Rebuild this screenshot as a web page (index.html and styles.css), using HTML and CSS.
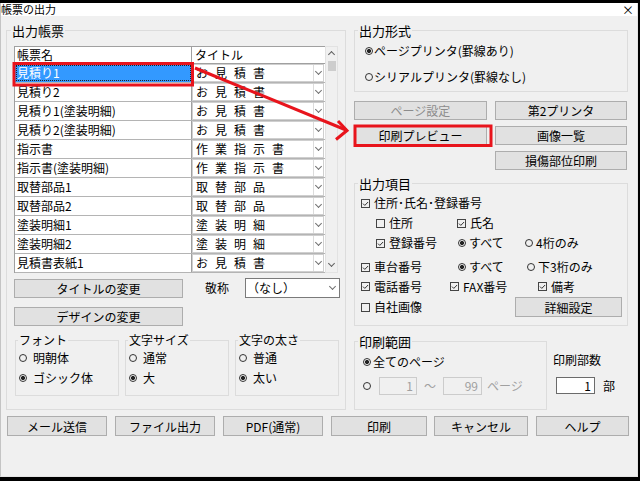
FILE: index.html
```html
<!DOCTYPE html>
<html lang="ja">
<head>
<meta charset="utf-8">
<title>帳票の出力</title>
<link rel="stylesheet" href="styles.css">
</head>
<body>
<div class="win">
  <div class="titlebar"><span class="ttl">帳票の出力</span><span class="close">×</span></div>
  <div class="content">
    <div class="main">
      <fieldset class="grp lg">
        <legend>出力帳票</legend>
        <div class="listwrap">
          <div class="grid">
            <div class="hdr"><div class="h1">帳票名</div><div class="h2">タイトル</div></div>
            <div class="row"><div class="c1 sel">見積り1</div><div class="c2"><div class="cmb"><span class="ct">お見積書</span><span class="dd"></span></div></div></div>
            <div class="row"><div class="c1">見積り2</div><div class="c2"><div class="cmb"><span class="ct">お見積書</span><span class="dd"></span></div></div></div>
            <div class="row"><div class="c1">見積り1(塗装明細)</div><div class="c2"><div class="cmb"><span class="ct">お見積書</span><span class="dd"></span></div></div></div>
            <div class="row"><div class="c1">見積り2(塗装明細)</div><div class="c2"><div class="cmb"><span class="ct">お見積書</span><span class="dd"></span></div></div></div>
            <div class="row"><div class="c1">指示書</div><div class="c2"><div class="cmb"><span class="ct">作業指示書</span><span class="dd"></span></div></div></div>
            <div class="row"><div class="c1">指示書(塗装明細)</div><div class="c2"><div class="cmb"><span class="ct">作業指示書</span><span class="dd"></span></div></div></div>
            <div class="row"><div class="c1">取替部品1</div><div class="c2"><div class="cmb"><span class="ct">取替部品</span><span class="dd"></span></div></div></div>
            <div class="row"><div class="c1">取替部品2</div><div class="c2"><div class="cmb"><span class="ct">取替部品</span><span class="dd"></span></div></div></div>
            <div class="row"><div class="c1">塗装明細1</div><div class="c2"><div class="cmb"><span class="ct">塗装明細</span><span class="dd"></span></div></div></div>
            <div class="row"><div class="c1">塗装明細2</div><div class="c2"><div class="cmb"><span class="ct">塗装明細</span><span class="dd"></span></div></div></div>
            <div class="row"><div class="c1">見積書表紙1</div><div class="c2"><div class="cmb"><span class="ct">お見積書</span><span class="dd"></span></div></div></div>
          </div>
          <div class="vs"><span class="sa up"></span><span class="thumb"></span><span class="sp"></span><span class="sa down"></span></div>
        </div>
        <div class="r1">
          <button class="btn bw">タイトルの変更</button>
          <span class="klbl">敬称</span>
          <div class="kcmb"><span class="kt">（なし）</span><span class="dd nb"></span></div>
        </div>
        <div class="r2"><button class="btn bw">デザインの変更</button></div>
        <div class="subs">
          <fieldset class="grp sg"><legend>フォント</legend>
            <div class="srow"><span class="rb"></span>明朝体</div>
            <div class="srow"><span class="rb on"></span>ゴシック体</div>
          </fieldset>
          <fieldset class="grp sg"><legend>文字サイズ</legend>
            <div class="srow"><span class="rb"></span>通常</div>
            <div class="srow"><span class="rb on"></span>大</div>
          </fieldset>
          <fieldset class="grp sg"><legend>文字の太さ</legend>
            <div class="srow"><span class="rb"></span>普通</div>
            <div class="srow"><span class="rb on"></span>太い</div>
          </fieldset>
        </div>
      </fieldset>

      <div class="right">
        <fieldset class="grp fk">
          <legend>出力形式</legend>
          <div class="frow"><span class="rb on"></span>ページプリンタ(罫線あり)</div>
          <div class="frow"><span class="rb"></span>シリアルプリンタ(罫線なし)</div>
        </fieldset>
        <div class="bgrid">
          <button class="btn dis">ページ設定</button>
          <button class="btn">第2プリンタ</button>
          <button class="btn">印刷プレビュー</button>
          <button class="btn">画像一覧</button>
          <button class="btn c2col">損傷部位印刷</button>
        </div>
        <fieldset class="grp fo">
          <legend>出力項目</legend>
          <div class="orow">
            <span class="it"><svg class="cb" viewBox="0 0 9 9"><rect x=".5" y=".5" width="8" height="8" fill="none" stroke="#444"/><path d="M2 4.6l1.8 1.8L7.1 3" fill="none" stroke="#333"/></svg>住所･氏名･登録番号</span>
          </div>
          <div class="orow ind">
            <span class="it w81"><svg class="cb" viewBox="0 0 9 9"><rect x=".5" y=".5" width="8" height="8" fill="none" stroke="#444"/></svg>住所</span>
            <span class="it"><svg class="cb" viewBox="0 0 9 9"><rect x=".5" y=".5" width="8" height="8" fill="none" stroke="#444"/><path d="M2 4.6l1.8 1.8L7.1 3" fill="none" stroke="#333"/></svg>氏名</span>
          </div>
          <div class="orow ind">
            <span class="it w82"><svg class="cb" viewBox="0 0 9 9"><rect x=".5" y=".5" width="8" height="8" fill="none" stroke="#444"/><path d="M2 4.6l1.8 1.8L7.1 3" fill="none" stroke="#333"/></svg>登録番号</span>
            <span class="it w67"><span class="rb on"></span>すべて</span>
            <span class="it"><span class="rb"></span>4桁のみ</span>
          </div>
          <div class="orow mt4">
            <span class="it w97"><svg class="cb" viewBox="0 0 9 9"><rect x=".5" y=".5" width="8" height="8" fill="none" stroke="#444"/><path d="M2 4.6l1.8 1.8L7.1 3" fill="none" stroke="#333"/></svg>車台番号</span>
            <span class="it w69"><span class="rb on"></span>すべて</span>
            <span class="it"><span class="rb"></span>下3桁のみ</span>
          </div>
          <div class="orow h19">
            <span class="it w89"><svg class="cb" viewBox="0 0 9 9"><rect x=".5" y=".5" width="8" height="8" fill="none" stroke="#444"/><path d="M2 4.6l1.8 1.8L7.1 3" fill="none" stroke="#333"/></svg>電話番号</span>
            <span class="it w88"><svg class="cb" viewBox="0 0 9 9"><rect x=".5" y=".5" width="8" height="8" fill="none" stroke="#444"/><path d="M2 4.6l1.8 1.8L7.1 3" fill="none" stroke="#333"/></svg>FAX番号</span>
            <span class="it"><svg class="cb" viewBox="0 0 9 9"><rect x=".5" y=".5" width="8" height="8" fill="none" stroke="#444"/><path d="M2 4.6l1.8 1.8L7.1 3" fill="none" stroke="#333"/></svg>備考</span>
          </div>
          <div class="orow mt1">
            <span class="it w154"><svg class="cb" viewBox="0 0 9 9"><rect x=".5" y=".5" width="8" height="8" fill="none" stroke="#444"/></svg>自社画像</span>
            <button class="btn dbtn">詳細設定</button>
          </div>
        </fieldset>
        <div class="brow">
          <fieldset class="grp fr">
            <legend>印刷範囲</legend>
            <div class="prow1"><span class="rb on"></span>全てのページ</div>
            <div class="prow2"><span class="rb"></span><span class="din">1</span><span class="tilde">～</span><span class="din w39">99</span><span class="gp">ページ</span></div>
          </fieldset>
          <div class="copies">
            <div class="clbl">印刷部数</div>
            <div class="crow"><span class="cin">1</span><span class="bu">部</span></div>
          </div>
        </div>
      </div>
    </div>
    <div class="bbar">
      <button class="btn b100">メール送信</button>
      <button class="btn b100">ファイル出力</button>
      <button class="btn b100">PDF(通常)</button>
      <button class="btn b96">印刷</button>
      <button class="btn b94 g7">キャンセル</button>
      <button class="btn b93">ヘルプ</button>
    </div>
  </div>
</div>
<svg class="anno" width="640" height="481" viewBox="0 0 640 481">
  <rect x="14" y="63.5" width="178.5" height="21.5" fill="none" stroke="#e8141c" stroke-width="3"/>
  <rect x="355" y="126" width="136" height="19.5" fill="none" stroke="#e8141c" stroke-width="3"/>
  <path d="M195 68 L346 130" fill="none" stroke="#e8141c" stroke-width="3"/>
  <path d="M338 121 L347 130.5 L336 139.5" fill="none" stroke="#e8141c" stroke-width="3"/>
</svg>
</body>
</html>
```

FILE: styles.css
```css
* { box-sizing: border-box; }
html, body { margin: 0; padding: 0; }
body {
  background: #000;
  width: 640px;
  height: 481px;
  overflow: hidden;
  font-family: "Noto Sans CJK JP", "Noto Sans", sans-serif;
  font-size: 12px;
  color: #000;
}
.win {
  margin-top: 3px;
  width: 638px;
  height: 474px;
  background: #f0f0f0;
  display: flex;
  flex-direction: column;
  border-left: 1px solid #c4c4c4;
  border-right: 1px solid #e4e4e4;
  border-bottom: 1px solid #e4e4e4;
}
.titlebar {
  height: 13px;
  background: #fff;
  display: flex;
  justify-content: space-between;
  align-items: center;
  font-size: 11px;
  line-height: 13px;
}
.ttl { margin-left: 0; white-space: nowrap; }
.close { font-size: 12px; line-height: 13px; margin-right: 3px; }
.content { padding-left: 5px; }
.main { display: flex; gap: 8px; align-items: flex-start; }

.grp { margin: 0; border: 1px solid #dcdcdc; padding: 0; min-width: 0; }
.grp > legend { padding: 0 1px; font-size: 13px; line-height: 15px; }

.lg { width: 340px; margin-top: 7px; padding: 8px 6px 13px 7px; }
.lg > legend { margin-left: -3px; }

.listwrap { display: flex; width: 324px; }
.grid { width: 311px; border-top: 1px solid #a0a0a0; border-left: 1px solid #a0a0a0; }
.hdr { display: flex; height: 17px; background: #fff; border-bottom: 1px solid #a0a0a0; line-height: 16px; }
.h1 { width: 177px; border-right: 1px solid #a0a0a0; padding-left: 2px; }
.h2 { padding-left: 3px; }
.row { display: flex; height: 19px; border-bottom: 1px solid #b4b4b4; }
.c1 {
  width: 177px;
  background: #fff;
  border-right: 1px solid #a0a0a0;
  padding-left: 2px;
  line-height: 18px;
  white-space: nowrap;
  overflow: hidden;
}
.c1.sel { background: #3399ff; color: #fff; outline: 1px dotted #222; outline-offset: -2px; }
.c2 { flex: 1; display: flex; background: #fff; padding-right: 1px; }
.cmb { flex: 1; display: flex; border: 1px solid #cfcfcf; background: #fff; }
.ct { flex: 1; padding-left: 3px; letter-spacing: 7px; line-height: 16px; white-space: nowrap; overflow: hidden; }
.dd { width: 10px; border-left: 1px solid #dcdcdc; display: flex; justify-content: center; align-items: center; }
.dd::after {
  content: "";
  width: 4px;
  height: 4px;
  border-right: 1px solid #707070;
  border-bottom: 1px solid #707070;
  transform: rotate(45deg);
  margin-top: -3px;
}
.dd.nb { border-left: none; width: 13px; }

.vs { width: 13px; background: #f0f0f0; display: flex; flex-direction: column; align-items: center; border: 1px solid #e2e2e2; }
.sa { width: 5px; height: 5px; border-left: 1px solid #606060; border-top: 1px solid #606060; }
.sa.up { transform: rotate(45deg); margin-top: 5px; }
.sa.down { transform: rotate(225deg); margin-bottom: 6px; }
.thumb { width: 8px; height: 10px; background: #cdcdcd; margin-top: 4px; }
.sp { flex: 1; }

.btn {
  font: inherit;
  font-size: 12px;
  background: #e1e1e1;
  border: 1px solid #adadad;
  border-radius: 0;
  padding: 0;
  margin: 0;
  color: #000;
  line-height: 17px;
  text-align: center;
}
.r1 { display: flex; align-items: center; margin-top: 5px; height: 20px; }
.bw { width: 169px; height: 19px; }
.klbl { width: 40px; margin-left: 22px; line-height: 16px; flex: none; }
.kcmb { width: 95px; height: 20px; border: 1px solid #7a7a7a; background: #fff; display: flex; flex: none; margin-right: -2px; }
.kt { flex: 1; padding-left: 1px; line-height: 18px; }
.r2 { margin-top: 9px; display: flex; }

.subs { display: flex; gap: 6px; margin-top: 7px; margin-left: 1px; }
.sg { width: 104px; padding: 1px 0 7px 3px; }
.sg > legend { font-size: 12px; line-height: 14px; margin-left: -1px; }
.srow { height: 20px; display: flex; align-items: center; line-height: 16px; }
.srow .rb { margin-right: 6px; }

.rb {
  display: inline-block;
  flex: none;
  width: 8px;
  height: 8px;
  border: 1px solid #333;
  border-radius: 50%;
}
.rb.on { background: radial-gradient(circle, #222 0 1.8px, transparent 2.3px); }

.right { width: 274px; display: flex; flex-direction: column; }
.right .grp > legend { margin-left: 3px; }
.fk { margin-top: 7px; padding: 0 0 1px 0; }
.frow { height: 26px; display: flex; align-items: center; padding-left: 10px; line-height: 16px; white-space: nowrap; }
.frow .rb { margin-right: 1px; }

.bgrid { display: grid; grid-template-columns: 133px 132px; column-gap: 8px; row-gap: 6px; margin-top: 9px; }
.bgrid .btn { height: 19px; }
.bgrid .dis { color: #8c8c8c; }
.bgrid .c2col { grid-column: 2; }

.fo { margin-top: 6px; padding: 2px 0 8px 0; }
.orow { display: flex; align-items: center; height: 20px; padding-left: 6px; line-height: 16px; white-space: nowrap; }
.orow.ind { padding-left: 21px; }
.orow.mt4 { margin-top: 4px; }
.orow.h19 { height: 19px; }
.orow.mt1 { margin-top: 1px; }
.it { display: flex; align-items: center; flex: none; }
.it .rb { margin-right: 3px; }
.cb { width: 9px; height: 9px; margin-right: 4px; flex: none; }
.w67 { width: 67px; }
.w69 { width: 69px; }
.w81 { width: 81px; }
.w82 { width: 82px; }
.w88 { width: 88px; }
.w89 { width: 89px; }
.w97 { width: 97px; }
.w154 { width: 154px; }
.dbtn { width: 107px; height: 20px; }

.brow { display: flex; margin-top: 8px; align-items: flex-start; }
.fr { width: 193px; padding: 1px 0 14px 0; }
.prow1 { height: 24px; display: flex; align-items: center; padding-left: 8px; line-height: 16px; }
.prow1 .rb { margin-right: 2px; }
.prow2 { height: 19px; margin-top: 2px; display: flex; align-items: center; padding-left: 8px; line-height: 16px; }
.prow2 .rb { margin-right: 8px; }
.din {
  width: 38px;
  height: 18px;
  border: 1px solid #cccccc;
  background: #f0f0f0;
  color: #a0a0a0;
  text-align: right;
  padding-right: 3px;
  line-height: 16px;
}
.din.w39 { width: 39px; }
.tilde { width: 26px; text-align: center; color: #a0a0a0; }
.gp { color: #a0a0a0; margin-left: 5px; white-space: nowrap; }

.copies { margin-left: 6px; }
.clbl { margin-top: 18px; line-height: 16px; }
.crow { display: flex; align-items: center; margin-top: 9px; margin-left: 3px; }
.cin {
  width: 39px;
  height: 17px;
  border: 1px solid #6b6b6b;
  background: #fff;
  text-align: right;
  padding-right: 3px;
  line-height: 15px;
}
.bu { margin-left: 8px; }

.bbar { display: flex; gap: 8px; margin-top: 6px; padding-left: 1px; }
.bbar .btn { height: 20px; flex: none; }
.bbar .b100 { width: 100px; }
.bbar .b96 { width: 96px; }
.bbar .b94 { width: 94px; }
.bbar .b93 { width: 93px; }
.bbar .g7 { margin-left: -1px; }

.anno { position: absolute; left: 0; top: 0; pointer-events: none; }
```
